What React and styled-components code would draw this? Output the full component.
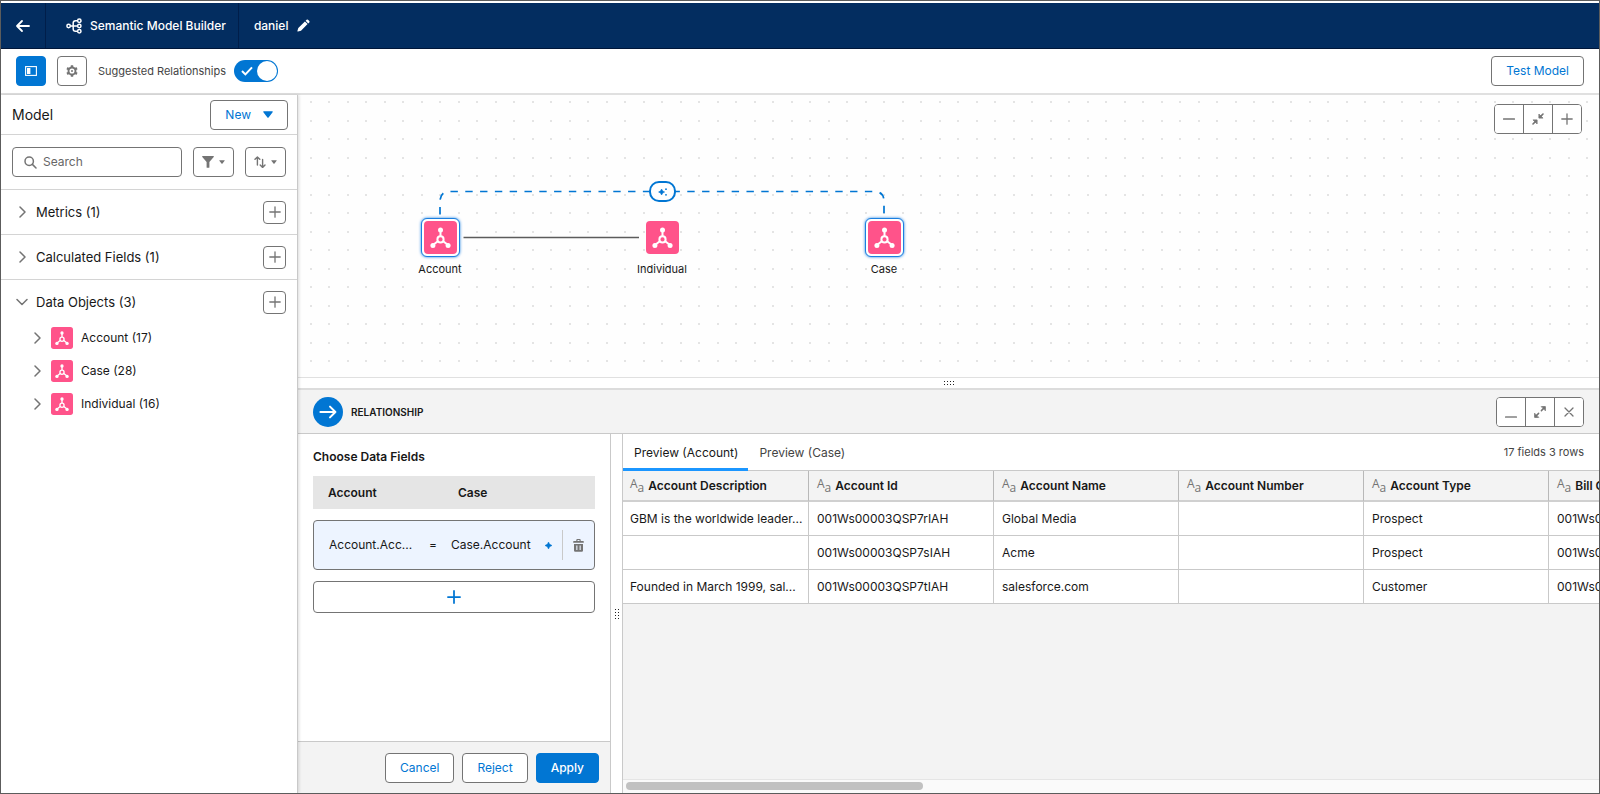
import React from "react";
import styled, { createGlobalStyle, css } from "styled-components";

const GlobalStyle = createGlobalStyle`
  *, *::before, *::after { box-sizing: border-box; }
  body { margin: 0; background: #fff; }
  body, button, input, table {
    font-family: Inter, "Liberation Sans", sans-serif;
    font-size: 12px;
    line-height: 16px;
    color: #181818;
  }
  button { cursor: pointer; }
`;

const blue = "#0176d3";
const navy = "#032d60";
const grey = "#747474";
const line = "#c9c9c9";

/* ---------- icons ---------- */

const BackIcon = () => (
  <svg width="16" height="14" viewBox="0 0 16 14" fill="none" stroke="#fff" strokeWidth="1.8" strokeLinecap="round" strokeLinejoin="round" aria-hidden="true">
    <path d="M14 7H2M7 2L2 7l5 5" />
  </svg>
);

const ModelIcon = () => (
  <svg width="16" height="16" viewBox="0 0 16 16" fill="none" stroke="#fff" strokeWidth="1.5" aria-hidden="true">
    <circle cx="2.6" cy="8" r="1.7" />
    <circle cx="13.3" cy="2.7" r="1.7" />
    <circle cx="13.3" cy="8" r="1.7" />
    <circle cx="13.3" cy="13.3" r="1.7" />
    <path d="M4.3 8h7.3M11.6 2.7H9.5Q7.2 2.7 7.2 5v6q0 2.3 2.3 2.3h2.1" />
  </svg>
);

const PencilIcon = () => (
  <svg width="13" height="13" viewBox="0 0 13 13" fill="#fff" aria-hidden="true">
    <path d="M1.3 9L7.9 2.4l2.7 2.7L4 11.7l-3 .9q-.7.1-.6-.6zM8.6 1.7l1-1q.7-.6 1.4 0l1.3 1.3q.6.7 0 1.4l-1 1z" />
  </svg>
);

const PanelIcon = () => (
  <svg width="12" height="10" viewBox="0 0 12 10" aria-hidden="true">
    <rect x="0.6" y="0.6" width="10.8" height="8.8" fill="none" stroke="#fff" strokeWidth="1.1" />
    <rect x="2" y="2" width="3.4" height="6" fill="#fff" />
  </svg>
);

const GearIcon = () => (
  <svg width="12" height="12" viewBox="0 0 12 12" fill="none" stroke={grey} aria-hidden="true">
    <circle cx="6" cy="6" r="3.5" strokeWidth="1.9" />
    <circle cx="6" cy="6" r="1" fill={grey} stroke="none" />
    <path strokeWidth="2.4" d="M6 2.4V.2M6 9.6v2.2M2.9 4.2L1 3.1M9.1 7.8l1.9 1.1M2.9 7.8L1 8.9M9.1 4.2l1.9-1.1" />
  </svg>
);

const CheckIcon = () => (
  <svg width="12" height="10" viewBox="0 0 12 10" fill="none" stroke="#fff" strokeWidth="2" aria-hidden="true">
    <path d="M1 5l3.4 3.4L11 1.4" />
  </svg>
);

const SearchIcon = () => (
  <svg width="13" height="13" viewBox="0 0 13 13" fill="none" stroke={grey} strokeWidth="1.5" strokeLinecap="round" aria-hidden="true">
    <circle cx="5.2" cy="5.2" r="4.2" />
    <path d="M8.4 8.4l3.6 3.6" />
  </svg>
);

const FilterIcon = () => (
  <svg width="12" height="12" viewBox="0 0 12 12" fill={grey} aria-hidden="true">
    <path d="M.6 0h10.8q.8.3.3 1L7.4 6v5.2q0 .5-.5.5H5.1q-.5 0-.5-.5V6L.3 1Q-.2.3.6 0z" />
  </svg>
);

const SortIcon = () => (
  <svg width="12" height="12" viewBox="0 0 12 12" fill="none" stroke={grey} strokeWidth="1.4" strokeLinecap="round" strokeLinejoin="round" aria-hidden="true">
    <path d="M3.4 9V1M1 3.3L3.4 1l2.4 2.3M8.6 3.4v8M6.2 9l2.4 2.4L11 9" />
  </svg>
);

const CaretIcon = ({ size = 6, color = grey }) => (
  <svg width={size} height={size === 6 ? 4 : 7} viewBox="0 0 10 7" fill={color} aria-hidden="true">
    <path d="M.7.3h8.6q.8.3.3.9L5.6 6.4q-.6.7-1.2 0L.4 1.2Q-.1.5.7.3z" />
  </svg>
);

const ChevronIcon = ({ open }) => (
  <svg width="12" height="12" viewBox="0 0 12 12" fill="none" stroke={grey} strokeWidth="1.5" strokeLinecap="round" strokeLinejoin="round" aria-hidden="true">
    <path d={open ? "M1 3.5l5 5 5-5" : "M4 1l5 5-5 5"} />
  </svg>
);

const PlusIcon = ({ size = 12, color = grey, weight = 1.3 }) => (
  <svg width={size} height={size} viewBox="0 0 12 12" fill="none" stroke={color} strokeWidth={weight} strokeLinecap="round" aria-hidden="true">
    <path d="M6 .8v10.4M.8 6h10.4" />
  </svg>
);

const MinusIcon = () => (
  <svg width="12" height="12" viewBox="0 0 12 12" fill="none" stroke={grey} strokeWidth="1.4" strokeLinecap="round" aria-hidden="true">
    <path d="M.6 6h10.8" />
  </svg>
);

const MinimizeIcon = () => (
  <svg width="12" height="12" viewBox="0 0 12 12" aria-hidden="true">
    <rect y="10" width="12" height="2" rx="0.6" fill="#a0a0a0" />
  </svg>
);

const ContractIcon = () => (
  <svg width="12" height="12" viewBox="0 0 12 12" fill={grey} stroke={grey} strokeLinecap="round" strokeLinejoin="round" aria-hidden="true">
    <path strokeWidth="1.6" d="M1 11l2.6-2.6M11 1L8.4 3.6" />
    <path strokeWidth="0.8" d="M1.4 6.9h3.7v3.7zM6.9 1.4v3.7h3.7z" />
  </svg>
);

const ExpandIcon = () => (
  <svg width="12" height="12" viewBox="0 0 12 12" fill={grey} stroke={grey} strokeLinecap="round" strokeLinejoin="round" aria-hidden="true">
    <path strokeWidth="1.5" d="M2 10l2.6-2.6M10 2L7.4 4.6" />
    <path strokeWidth="0.8" d="M.6 7.6v3.8h3.8zM7.6.6h3.8v3.8z" />
  </svg>
);

const CloseIcon = () => (
  <svg width="12" height="12" viewBox="0 0 12 12" fill="none" stroke={grey} strokeWidth="1.3" strokeLinecap="round" aria-hidden="true">
    <path d="M2 2l8 8M10 2l-8 8" />
  </svg>
);

const TrashIcon = () => (
  <svg width="11" height="13" viewBox="0 0 11 13" aria-hidden="true">
    <path fill={grey} fillRule="evenodd" d="M3.3 2V1q0-1 1-1h2.4q1 0 1 1v1H10q.9 0 .9.9t-.9.9H1q-.9 0-.9-.9T1 2zM4.5 2h2V1.1h-2zM1 5h9v6.6q0 1.2-1.2 1.2H2.2Q1 12.8 1 11.6zM3.3 6.6v4.4h1.1V6.6zM6.6 6.6v4.4h1.1V6.6z" />
  </svg>
);

const SparkleIcon = () => (
  <svg width="7" height="7" viewBox="0 0 8 8" fill={blue} aria-hidden="true">
    <path d="M4 0q.6 3.4 4 4-3.4.6-4 4-.6-3.4-4-4 3.4-.6 4-4z" stroke={blue} strokeWidth="0.6" />
  </svg>
);

const SparklesIcon = () => (
  <svg width="10" height="10" viewBox="0 0 10 10" fill={blue} aria-hidden="true">
    <path d="M3.6 2q.6 2.4 3 3-2.4.6-3 3-.6-2.4-3-3 2.4-.6 3-3z" stroke={blue} strokeWidth="0.6" />
    <circle cx="8" cy="2.2" r="0.9" />
    <circle cx="8" cy="7.8" r="0.9" />
  </svg>
);

const ArrowIcon = () => (
  <svg width="18" height="14" viewBox="0 0 18 14" fill="none" stroke="#fff" strokeWidth="2" strokeLinecap="round" strokeLinejoin="round" aria-hidden="true">
    <path d="M1.4 7h15M11 1.6L16.4 7 11 12.4" />
  </svg>
);

const ObjectIcon = ({ size }) => (
  <svg width={size} height={size} viewBox="0 0 33 33" aria-hidden="true">
    <rect width="33" height="33" rx="4" fill="#ff538a" />
    <g fill="none" stroke="#fff" strokeWidth="2">
      <circle cx="16.5" cy="18.4" r="3.1" />
      <path d="M16.5 15V9M13.8 20.2L9 24M19.2 20.2L24 24" />
    </g>
    <g fill="#fff">
      <circle cx="16.5" cy="9" r="2.5" />
      <circle cx="8.9" cy="24.6" r="2.5" />
      <circle cx="24.1" cy="24.6" r="2.5" />
    </g>
  </svg>
);

/* ---------- shared controls ---------- */

const Button = styled.button`
  height: 30px;
  padding: 0 14px;
  border: 1px solid ${(p) => (p.$primary ? blue : grey)};
  border-radius: 4px;
  background: ${(p) => (p.$primary ? blue : "#fff")};
  color: ${(p) => (p.$primary ? "#fff" : blue)};
  font-weight: ${(p) => (p.$primary ? 500 : 400)};
  display: inline-flex;
  align-items: center;
  justify-content: center;
  gap: 12px;
`;

const IconButton = styled(Button)`
  width: ${(p) => p.$width || 30}px;
  height: ${(p) => p.$height || 30}px;
  padding: 0;
  gap: 5px;
  flex: none;
`;

const ButtonGroup = styled.div`
  display: flex;
  border: 1px solid ${grey};
  border-radius: 4px;
  background: #fff;
  overflow: hidden;
`;

const GroupButton = styled.button`
  width: 28px;
  height: 28px;
  padding: 0;
  border: 0;
  background: #fff;
  display: grid;
  place-items: center;
  & + & {
    width: 29px;
    border-left: 1px solid ${grey};
  }
`;

const Grip = styled.span`
  width: ${(p) => (p.$vertical ? 6 : 12)}px;
  height: ${(p) => (p.$vertical ? 12 : 6)}px;
  background: radial-gradient(circle, #222 0 1px, transparent 1px) 0 0 / 3px 3px;
`;

/* ---------- page frame ---------- */

const Page = styled.div`
  height: 100vh;
  min-height: 640px;
  display: flex;
  flex-direction: column;
  border: 1px solid #5c5c5c;
  padding-top: 2px;
  overflow: hidden;
`;

const Header = styled.header`
  flex: none;
  height: 46px;
  display: flex;
  background: ${navy};
  border-bottom: 1px solid #001639;
  color: #fff;
  font-weight: 500;
`;

const BackLink = styled.a`
  width: 45px;
  display: grid;
  place-items: center;
  border-right: 1px solid #001e4a;
`;

const AppName = styled.div`
  display: flex;
  align-items: center;
  gap: 8px;
  padding: 0 12px 0 20px;
  border-right: 1px solid #001e4a;
`;

const ModelName = styled.div`
  display: flex;
  align-items: center;
  gap: 9px;
  padding-left: 15px;
`;

const RenameButton = styled.button`
  display: grid;
  padding: 0;
  border: 0;
  background: none;
`;

const Toolbar = styled.div`
  flex: none;
  height: 46px;
  display: flex;
  align-items: center;
  gap: 11px;
  padding: 0 15px;
  border-bottom: 2px solid #e0e0e0;
`;

const ToggleLabel = styled.label`
  display: flex;
  align-items: center;
  gap: 8px;
  margin-right: auto;
  font-size: 11px;
  color: #444;
`;

const Switch = styled.span`
  position: relative;
  width: 44px;
  height: 22px;
  padding-left: 7px;
  border-radius: 11px;
  background: ${blue};
  display: flex;
  align-items: center;
  &::after {
    content: "";
    position: absolute;
    top: 1px;
    right: 1px;
    width: 20px;
    height: 20px;
    border-radius: 50%;
    background: #fff;
  }
`;

const SwitchInput = styled.input`
  position: absolute;
  inset: 0;
  margin: 0;
  opacity: 0;
`;

const Body = styled.div`
  flex: 1;
  min-height: 0;
  display: flex;
`;

/* ---------- sidebar ---------- */

const Sidebar = styled.aside`
  position: relative;
  z-index: 1;
  flex: none;
  width: 297px;
  background: #fff;
  border-right: 1px solid ${line};
  box-shadow: 1px 0 3px rgba(0, 0, 0, 0.14);
`;

const SideHeader = styled.div`
  height: 40px;
  display: flex;
  align-items: center;
  justify-content: space-between;
  padding: 0 9px 0 11px;
  border-bottom: 1px solid #d4d4d4;
`;

const SideTitle = styled.h1`
  margin: 0;
  font-size: 14px;
  font-weight: 400;
`;

const SearchRow = styled.div`
  height: 55px;
  display: flex;
  align-items: center;
  gap: 11px;
  padding: 0 11px;
  border-bottom: 1px solid #d4d4d4;
`;

const SearchBox = styled.label`
  flex: 1;
  min-width: 0;
  height: 30px;
  display: flex;
  align-items: center;
  gap: 6px;
  padding: 0 11px;
  border: 1px solid ${grey};
  border-radius: 4px;
`;

const SearchInput = styled.input`
  flex: 1;
  min-width: 0;
  padding: 0;
  border: 0;
  outline: 0;
  background: none;
  &::placeholder {
    color: #666;
    opacity: 1;
  }
`;

const Section = styled.section`
  ${(p) => !p.$last && css`border-bottom: 1px solid #d4d4d4;`}
`;

const SectionHeader = styled.div`
  height: 44px;
  display: flex;
  align-items: center;
  padding: 0 11px 0 15px;
`;

const Disclosure = styled.button`
  flex: 1;
  display: flex;
  align-items: center;
  gap: 8px;
  padding: 0;
  border: 0;
  background: none;
  font-size: 13px;
  text-align: left;
`;

const ObjectList = styled.ul`
  margin: -3px 0 0;
  padding: 0;
  list-style: none;
`;

const ObjectItem = styled.li`
  height: 33px;
  padding-left: 30px;
  display: flex;
`;

const ObjectToggle = styled(Disclosure)`
  font-size: 12px;
`;

/* ---------- canvas ---------- */

const Workspace = styled.main`
  flex: 1;
  min-width: 0;
  display: flex;
  flex-direction: column;
`;

const dot = "radial-gradient(circle at 1px 1px, #e4e4e4 0 1px, transparent 1px)";

const Canvas = styled.div`
  position: relative;
  flex: 94 1 0;
  min-height: 200px;
  overflow: hidden;
  background:
    ${dot} 12px 6px / 37px 37px,
    ${dot} 30px 6px / 37px 37px,
    ${dot} 12px 25px / 37px 37px,
    ${dot} 30px 25px / 37px 37px,
    #fefefe;
`;

const Edges = styled.svg`
  position: absolute;
  left: 0;
  top: 0;
  width: 100%;
  height: 100%;
`;

const Node = styled.button`
  position: absolute;
  left: ${(p) => p.$x - 50}px;
  top: ${(p) => p.$y}px;
  width: 100px;
  padding: 0;
  border: 0;
  background: none;
  display: flex;
  flex-direction: column;
  align-items: center;
  gap: 4px;
  font-size: 11px;
`;

const NodeFrame = styled.span`
  width: 39px;
  height: 39px;
  display: grid;
  place-items: center;
  border-radius: 6px;
  ${(p) =>
    p.$selected &&
    css`
      border: 1px solid #1b7fe0;
      background: #fff;
      box-shadow: 0 0 3px #1b7fe0;
    `}
`;

const Suggestion = styled.button`
  position: absolute;
  left: 351px;
  top: 86px;
  width: 27px;
  height: 21px;
  padding: 0;
  border: 2px solid ${blue};
  border-radius: 10px;
  background: #fff;
  display: grid;
  place-items: center;
`;

const ZoomControls = styled(ButtonGroup)`
  position: absolute;
  top: 9px;
  right: 17px;
`;

/* ---------- bottom panel ---------- */

const RowSplitter = styled.div`
  flex: none;
  height: 11px;
  border-top: 1px solid #e0e0e0;
  display: grid;
  place-items: center;
`;

const Panel = styled.section`
  flex: 135 1 0;
  min-height: 300px;
  display: flex;
  flex-direction: column;
`;

const PanelHeader = styled.div`
  flex: none;
  height: 46px;
  display: flex;
  align-items: center;
  gap: 8px;
  padding: 0 15px;
  border-top: 2px solid #dcdcdc;
  border-bottom: 1px solid ${line};
  background: #f3f3f3;
`;

const PanelBadge = styled.span`
  width: 30px;
  height: 30px;
  border-radius: 50%;
  background: ${blue};
  display: grid;
  place-items: center;
`;

const PanelTitle = styled.h2`
  flex: 1;
  margin: 0;
  font-size: 10px;
  font-weight: 600;
  text-transform: uppercase;
`;

const PanelBody = styled.div`
  flex: 1;
  min-height: 0;
  display: flex;
`;

const Fields = styled.div`
  flex: none;
  width: 312px;
  display: flex;
  flex-direction: column;
`;

const FieldsContent = styled.div`
  flex: 1;
  padding: 15px 15px 0;
  display: flex;
  flex-direction: column;
  gap: 11px;
`;

const FieldsTitle = styled.h3`
  margin: 0;
  font-size: 12px;
  font-weight: 600;
`;

const FieldsHead = styled.div`
  height: 33px;
  display: grid;
  grid-template-columns: 130px 1fr;
  align-items: center;
  padding: 0 15px;
  background: #e5e5e5;
  font-weight: 600;
`;

const FieldRow = styled.div`
  height: 50px;
  display: grid;
  grid-template-columns: 100px 22px 94px 17px 1fr;
  align-items: center;
  padding-left: 15px;
  border: 1px solid ${grey};
  border-radius: 4px;
  background: #edf4ff;
`;

const DeleteButton = styled.button`
  height: 30px;
  padding: 0;
  border: 0;
  border-left: 1px solid ${line};
  background: none;
  display: grid;
  place-items: center;
`;

const AddField = styled(Button)`
  height: 32px;
`;

const Footer = styled.div`
  height: 52px;
  display: flex;
  align-items: center;
  justify-content: flex-end;
  gap: 8px;
  padding: 0 11px;
  border-top: 1px solid ${line};
  background: #f3f3f3;
`;

const ColumnSplitter = styled.div`
  flex: none;
  width: 13px;
  display: grid;
  place-items: center;
  border: solid ${line};
  border-width: 0 1px;
`;

const Preview = styled.div`
  flex: 1;
  min-width: 0;
  display: flex;
  flex-direction: column;
  background: #f3f3f3;
`;

const TabBar = styled.div`
  flex: none;
  height: 37px;
  display: flex;
  align-items: stretch;
  padding-right: 15px;
  border-bottom: 1px solid ${line};
  background: #fff;
`;

const Tab = styled.button`
  margin-bottom: -1px;
  padding: 3px 10px 0 11px;
  border: 0;
  border-bottom: 3px solid ${(p) => (p.$active ? "#1b96ff" : "transparent")};
  background: none;
  color: ${(p) => (p.$active ? "#181818" : "#444")};
`;

const Summary = styled.span`
  margin-left: auto;
  align-self: center;
  font-size: 11px;
  color: #444;
`;

const TableViewport = styled.div`
  flex: 1;
  min-height: 0;
  overflow: hidden;
`;

const Table = styled.table`
  width: 1111px;
  table-layout: fixed;
  border-collapse: separate;
  border-spacing: 0;
`;

const Th = styled.th`
  width: 185px;
  height: 31px;
  padding: 0 4px 0 8px;
  border-right: 1px solid #b8b8b8;
  border-bottom: 2px solid #d0d0d0;
  font-weight: 600;
  text-align: left;
  white-space: nowrap;
  &:first-child {
    width: 186px;
    padding-left: 7px;
  }
`;

const Td = styled.td`
  height: 34px;
  padding: 0 4px 0 8px;
  border-right: 1px solid ${line};
  border-bottom: 1px solid ${line};
  background: #fff;
  white-space: nowrap;
  &:first-child {
    padding-left: 7px;
  }
`;

const TypeMark = styled.span`
  margin-right: 4px;
  font-family: "Open Sans", sans-serif;
  font-weight: 400;
  line-height: 12px;
  vertical-align: 2px;
  color: ${grey};
`;

const LowerMark = styled.span`
  vertical-align: -4px;
`;

const ScrollTrack = styled.div`
  flex: none;
  height: 14px;
  padding: 2px 3px;
  border-top: 1px solid #e5e5e5;
  background: #fafafa;
`;

const ScrollThumb = styled.div`
  width: 30.6%;
  height: 8px;
  border-radius: 4px;
  background: #c1c1c1;
`;

/* ---------- data ---------- */

const objects = ["Account (17)", "Case (28)", "Individual (16)"];

const nodes = [
  { name: "Account", x: 142, selected: true },
  { name: "Individual", x: 364 },
  { name: "Case", x: 586, selected: true },
];

const columns = ["Account Description", "Account Id", "Account Name", "Account Number", "Account Type", "Bill City"];

const rows = [
  ["GBM is the worldwide leader...", "001Ws00003QSP7rIAH", "Global Media", "", "Prospect", "001Ws00003QSP7rIAH"],
  ["", "001Ws00003QSP7sIAH", "Acme", "", "Prospect", "001Ws00003QSP7sIAH"],
  ["Founded in March 1999, sal...", "001Ws00003QSP7tIAH", "salesforce.com", "", "Customer", "001Ws00003QSP7tIAH"],
];

function SideSection({ title, open, last, children }) {
  return (
    <Section $last={last}>
      <SectionHeader>
        <Disclosure aria-expanded={!!open}>
          <ChevronIcon open={open} />
          {title}
        </Disclosure>
        <IconButton $width={23} $height={23} aria-label="Add">
          <PlusIcon />
        </IconButton>
      </SectionHeader>
      {children}
    </Section>
  );
}

export default function App() {
  return (
    <Page>
      <GlobalStyle />
      <Header>
        <BackLink href="#" aria-label="Back">
          <BackIcon />
        </BackLink>
        <AppName>
          <ModelIcon />
          Semantic Model Builder
        </AppName>
        <ModelName>
          daniel
          <RenameButton aria-label="Rename">
            <PencilIcon />
          </RenameButton>
        </ModelName>
      </Header>

      <Toolbar>
        <IconButton $primary aria-label="Toggle panel">
          <PanelIcon />
        </IconButton>
        <IconButton aria-label="Settings">
          <GearIcon />
        </IconButton>
        <ToggleLabel>
          Suggested Relationships
          <Switch>
            <SwitchInput type="checkbox" defaultChecked />
            <CheckIcon />
          </Switch>
        </ToggleLabel>
        <Button>Test Model</Button>
      </Toolbar>

      <Body>
        <Sidebar>
          <SideHeader>
            <SideTitle>Model</SideTitle>
            <Button>
              New
              <CaretIcon size={10} color={blue} />
            </Button>
          </SideHeader>
          <SearchRow>
            <SearchBox>
              <SearchIcon />
              <SearchInput type="text" placeholder="Search" aria-label="Search" />
            </SearchBox>
            <IconButton $width={41} aria-label="Filter">
              <FilterIcon />
              <CaretIcon />
            </IconButton>
            <IconButton $width={41} aria-label="Sort">
              <SortIcon />
              <CaretIcon />
            </IconButton>
          </SearchRow>
          <SideSection title="Metrics (1)" />
          <SideSection title="Calculated Fields (1)" />
          <SideSection title="Data Objects (3)" open last>
            <ObjectList>
              {objects.map((name) => (
                <ObjectItem key={name}>
                  <ObjectToggle aria-expanded={false}>
                    <ChevronIcon />
                    <ObjectIcon size={22} />
                    {name}
                  </ObjectToggle>
                </ObjectItem>
              ))}
            </ObjectList>
          </SideSection>
        </Sidebar>

        <Workspace>
          <Canvas>
            <Edges aria-hidden="true">
              <path d="M142 119.5V106.5Q142 96.5 152 96.5H576Q586 96.5 586 106.5V119.5" fill="none" stroke={blue} strokeWidth="1.7" strokeDasharray="7.4 7.4" />
              <path d="M165.5 142.5H341" stroke="#5c5c5c" strokeWidth="1.3" />
            </Edges>
            {nodes.map((n) => (
              <Node key={n.name} $x={n.x} $y={123}>
                <NodeFrame $selected={n.selected}>
                  <ObjectIcon size={33} />
                </NodeFrame>
                {n.name}
              </Node>
            ))}
            <Suggestion aria-label="Suggested relationship">
              <SparklesIcon />
            </Suggestion>
            <ZoomControls>
              <GroupButton aria-label="Zoom out"><MinusIcon /></GroupButton>
              <GroupButton aria-label="Fit"><ContractIcon /></GroupButton>
              <GroupButton aria-label="Zoom in"><PlusIcon /></GroupButton>
            </ZoomControls>
          </Canvas>

          <RowSplitter>
            <Grip />
          </RowSplitter>

          <Panel>
            <PanelHeader>
              <PanelBadge>
                <ArrowIcon />
              </PanelBadge>
              <PanelTitle>Relationship</PanelTitle>
              <ButtonGroup>
                <GroupButton aria-label="Minimize"><MinimizeIcon /></GroupButton>
                <GroupButton aria-label="Expand"><ExpandIcon /></GroupButton>
                <GroupButton aria-label="Close"><CloseIcon /></GroupButton>
              </ButtonGroup>
            </PanelHeader>
            <PanelBody>
              <Fields>
                <FieldsContent>
                  <FieldsTitle>Choose Data Fields</FieldsTitle>
                  <FieldsHead>
                    <span>Account</span>
                    <span>Case</span>
                  </FieldsHead>
                  <FieldRow>
                    <span>Account.Acc...</span>
                    <span>=</span>
                    <span>Case.Account</span>
                    <SparkleIcon />
                    <DeleteButton aria-label="Delete">
                      <TrashIcon />
                    </DeleteButton>
                  </FieldRow>
                  <AddField aria-label="Add field pair">
                    <PlusIcon size={14} color={blue} weight={1.5} />
                  </AddField>
                </FieldsContent>
                <Footer>
                  <Button>Cancel</Button>
                  <Button>Reject</Button>
                  <Button $primary>Apply</Button>
                </Footer>
              </Fields>
              <ColumnSplitter>
                <Grip $vertical />
              </ColumnSplitter>
              <Preview>
                <TabBar role="tablist">
                  <Tab role="tab" aria-selected="true" $active>Preview (Account)</Tab>
                  <Tab role="tab" aria-selected="false">Preview (Case)</Tab>
                  <Summary>17 fields 3 rows</Summary>
                </TabBar>
                <TableViewport>
                  <Table>
                    <thead>
                      <tr>
                        {columns.map((c) => (
                          <Th key={c} scope="col">
                            <TypeMark aria-hidden="true">
                              A<LowerMark>a</LowerMark>
                            </TypeMark>
                            {c}
                          </Th>
                        ))}
                      </tr>
                    </thead>
                    <tbody>
                      {rows.map((r, i) => (
                        <tr key={i}>
                          {r.map((v, j) => (
                            <Td key={j}>{v}</Td>
                          ))}
                        </tr>
                      ))}
                    </tbody>
                  </Table>
                </TableViewport>
                <ScrollTrack>
                  <ScrollThumb />
                </ScrollTrack>
              </Preview>
            </PanelBody>
          </Panel>
        </Workspace>
      </Body>
    </Page>
  );
}
